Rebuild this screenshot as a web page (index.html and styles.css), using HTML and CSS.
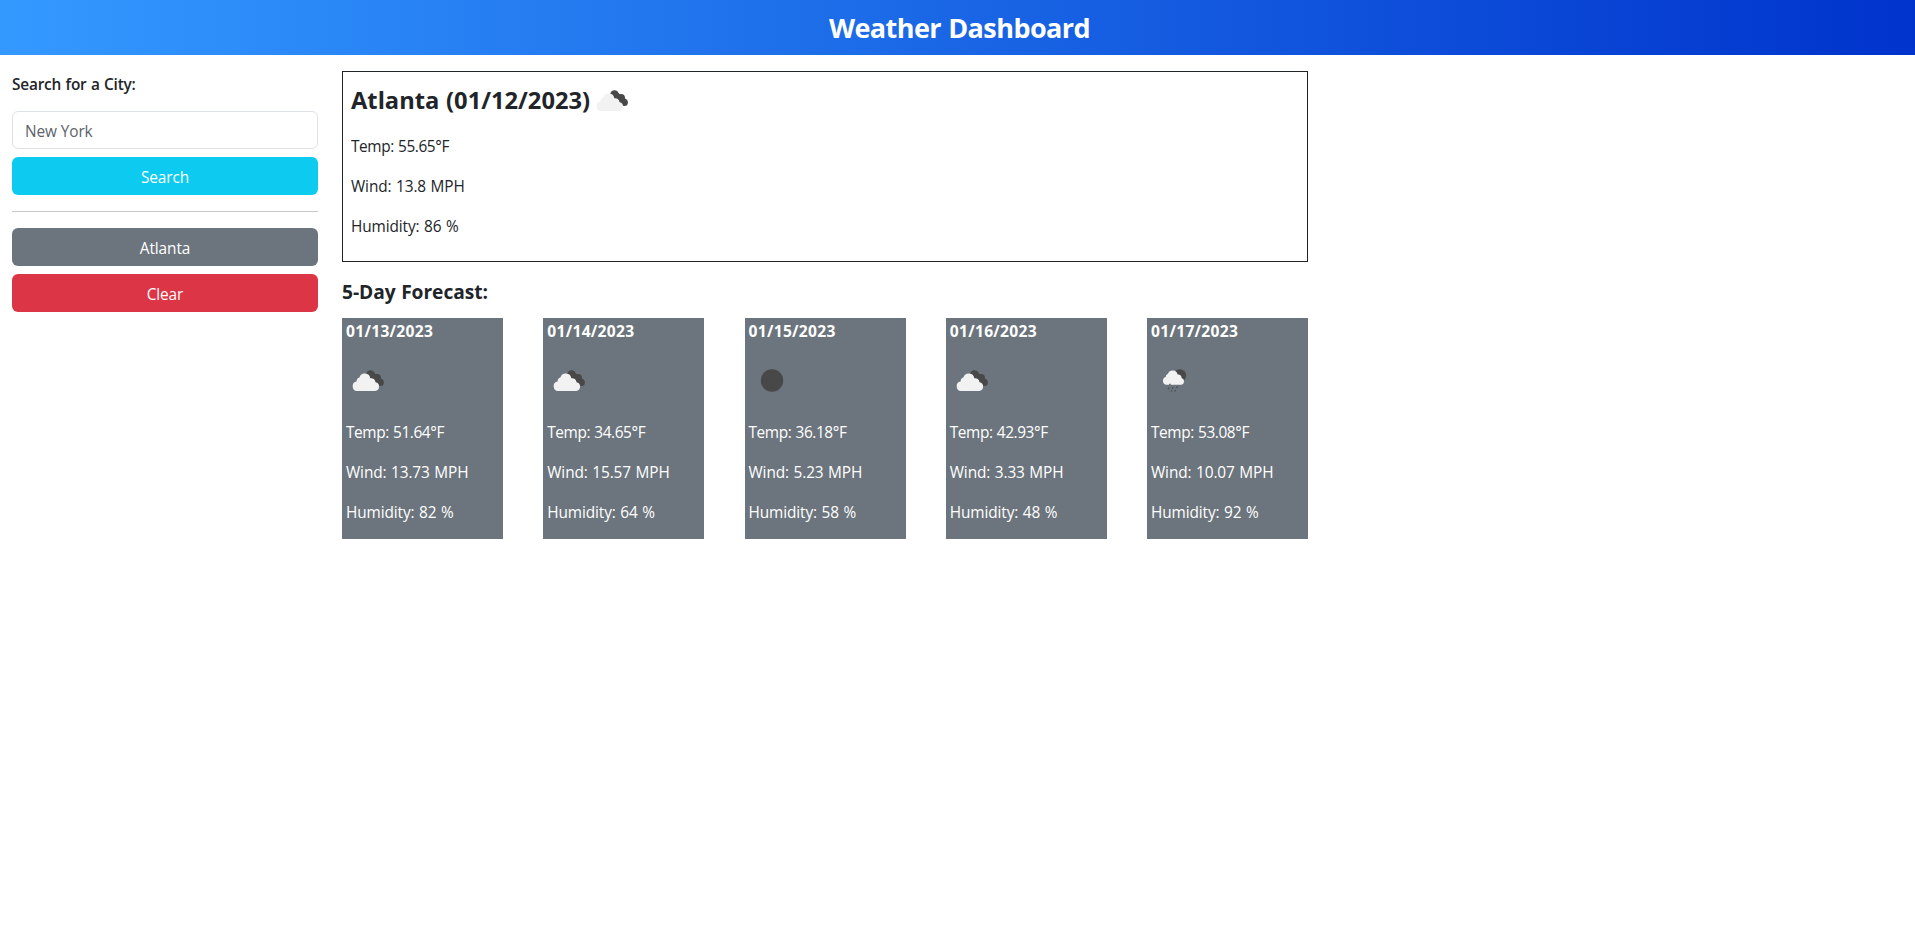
FILE: index.html
```html
<!DOCTYPE html>
<html lang="en">
<head>
<meta charset="utf-8">
<title>Weather Dashboard</title>
<link rel="stylesheet" href="styles.css">
</head>
<body>
<svg class="symbols" aria-hidden="true">
  <symbol id="clouds" viewBox="0 0 50 50">
    <g fill="#484848"><circle cx="24.500" cy="19.500" r="4.300"/><circle cx="31" cy="23" r="4"/><circle cx="34.300" cy="27.500" r="3.600"/><path d="M22 22l5-5 10 8-4 5z"/></g>
    <path fill="#f2f2f2" d="M11 36a4.800 4.800 0 0 1-.4-9.500 4 4 0 0 1 2.800-4 5.600 5.600 0 0 1 10.900.8 4.300 4.300 0 0 1 5.200 4 4.400 4.400 0 0 1-.4 8.700z"/>
  </symbol>
  <symbol id="moon" viewBox="0 0 50 50"><circle cx="23" cy="25.500" r="11.200" fill="#484848"/></symbol>
  <symbol id="rain" viewBox="0 0 50 50">
    <circle cx="28.800" cy="20.500" r="6.300" fill="#484848"/>
    <path fill="#f2f2f2" d="M15 29.800a4 4 0 0 1-.3-7.700 3.400 3.400 0 0 1 2.300-3.300 5 5 0 0 1 9.600.7 3.500 3.500 0 0 1 4 3.600 3.450 3.450 0 0 1-.3 6.700z"/>
    <path fill="none" stroke="#484848" stroke-width="1.100" d="M19.300 28.800l-.8 1.500M18 32.500l-.9 1.700M22.200 32l-.9 1.700M26.500 31.200l-.9 1.700M20.700 35.200l-.6 1.200M24.500 35l-.8 1.500"/>
  </symbol>
</svg>
<header class="header"><h1 class="title">Weather Dashboard</h1></header>
<main class="layout">
  <aside class="sidebar">
    <label class="label" for="city">Search for a City:</label>
    <input class="input" id="city" type="text" placeholder="New York">
    <button class="btn btn-info">Search</button>
    <hr class="rule">
    <button class="btn btn-secondary">Atlanta</button>
    <button class="btn btn-danger">Clear</button>
  </aside>
  <section class="content">
    <div class="current">
      <h2 class="city"><span>Atlanta (01/12/2023)</span><svg class="icon"><use href="#clouds"/></svg></h2>
      <p class="temp">Temp: 55.65°F</p><p>Wind: 13.8 MPH</p><p>Humidity: 86 %</p>
    </div>
    <h3 class="subtitle">5-Day Forecast:</h3>
    <div class="forecast">
      <article class="card"><h4>01/13/2023</h4><svg class="icon"><use href="#clouds"/></svg><p class="temp">Temp: 51.64°F</p><p>Wind: 13.73 MPH</p><p>Humidity: 82 %</p></article>
      <article class="card"><h4>01/14/2023</h4><svg class="icon"><use href="#clouds"/></svg><p class="temp">Temp: 34.65°F</p><p>Wind: 15.57 MPH</p><p>Humidity: 64 %</p></article>
      <article class="card"><h4>01/15/2023</h4><svg class="icon"><use href="#moon"/></svg><p class="temp">Temp: 36.18°F</p><p>Wind: 5.23 MPH</p><p>Humidity: 58 %</p></article>
      <article class="card"><h4>01/16/2023</h4><svg class="icon"><use href="#clouds"/></svg><p class="temp">Temp: 42.93°F</p><p>Wind: 3.33 MPH</p><p>Humidity: 48 %</p></article>
      <article class="card"><h4>01/17/2023</h4><svg class="icon"><use href="#rain"/></svg><p class="temp">Temp: 53.08°F</p><p>Wind: 10.07 MPH</p><p>Humidity: 92 %</p></article>
    </div>
  </section>
</main>
</body>
</html>
```
FILE: styles.css
```css
* { box-sizing: border-box; }
body {
  margin: 0;
  background: #fff;
  color: #212529;
  font: 15.4px/24px "Segoe UI", "Open Sans", "Noto Sans", sans-serif;
  letter-spacing: -0.1px;
  word-spacing: 0.6px;
}
h1, h2, h3, h4, p { margin: 0; }
p { margin-bottom: 16px; }
.temp { letter-spacing: -0.4px; }
.symbols { display: none; }
.header {
  height: 55px;
  padding-left: 4px;
  background: linear-gradient(to right, #3399ff 0%, #0033cc 100%);
}
.title { color: #fff; font-size: 27px; line-height: 55px; font-weight: 700; letter-spacing: -0.55px; text-align: center; }
.layout { display: flex; align-items: flex-start; gap: 24px; padding: 16px 12px; }
.sidebar { width: 306px; display: flex; flex-direction: column; }
.label { height: 40px; line-height: 28px; font-weight: 600; letter-spacing: -0.2px; }
.input, .btn { width: 100%; height: 38px; border-radius: 6px; font: inherit; letter-spacing: inherit; }
.input { margin-bottom: 8px; padding: 2px 12px 0; border: 1px solid #dee2e6; }
.input::placeholder { color: #5c6369; opacity: 1; }
.btn { padding: 3px 0 0; border: 0; color: #fff; }
.btn-info { background: #0dcaf0; }
.btn-secondary { margin-bottom: 8px; background: #6c757d; }
.btn-danger { background: #dc3545; }
.rule { width: 100%; height: 1px; margin: 16px 0; border: 0; background: #c7c8c9; }
.content { width: 966px; }
.current { height: 191px; padding: 3px 8px; border: 1px solid #212529; }
.city { display: flex; align-items: center; height: 50px; margin-bottom: 10px; font-size: 23.7px; font-weight: 700; letter-spacing: 0; }
.icon { display: block; width: 50px; height: 50px; }
.subtitle { margin: 18px 0 14px; font-size: 19.2px; font-weight: 700; letter-spacing: -0.05px; }
.forecast { display: flex; justify-content: space-between; }
.card { width: 161px; height: 221px; padding: 1px 4px; background: #6c757d; color: #fff; }
.card h4 { font-size: 15.6px; font-weight: 700; letter-spacing: 0.3px; margin-bottom: 12px; }
.card .icon { margin-bottom: 16px; }
```
